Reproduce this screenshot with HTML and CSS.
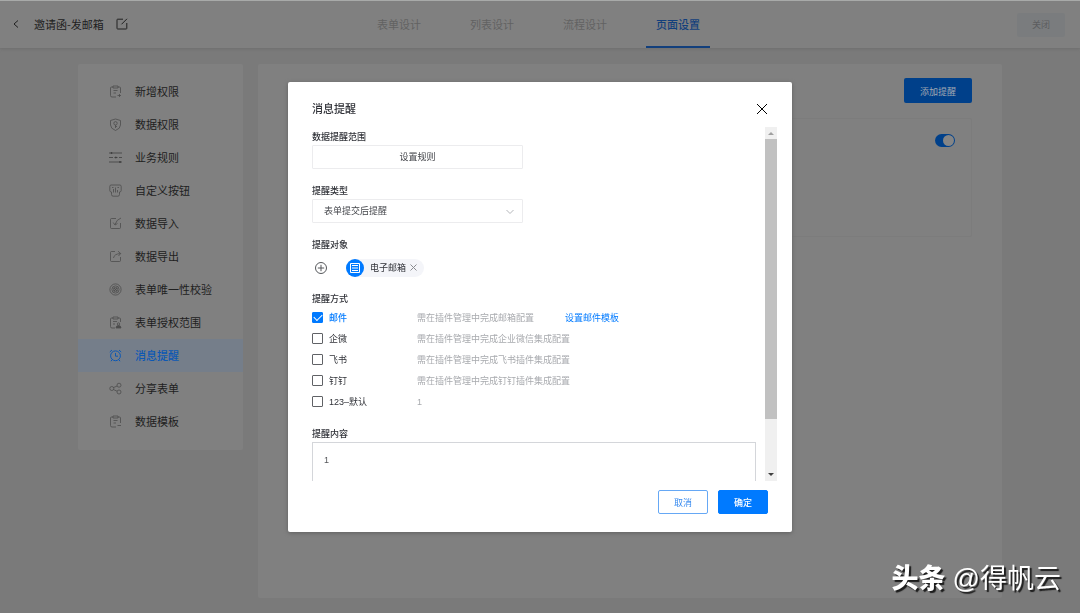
FILE: index.html
```html
<!DOCTYPE html>
<html lang="zh-CN">
<head>
<meta charset="utf-8">
<meta name="viewport" content="width=device-width, initial-scale=1">
<title>消息提醒</title>
<link rel="stylesheet" href="styles.css">
</head>
<body>
<header class="topbar">
  <div class="topbar-title">
    <button class="icon-btn" type="button" aria-label="返回"><svg width="8" height="10" viewBox="0 0 8 10"><path d="M6 1.500 2 5l4 3.500"/></svg></button>
    <h1 class="page-name">邀请函-发邮箱</h1>
    <button class="icon-btn" type="button" aria-label="编辑"><svg width="12" height="12" viewBox="0 0 12 12"><path d="M7 1.200H1.600q-.6 0-.6.6v8.600q0 .6.6.6h8.600q.6 0 .6-.6V5M5.500 6.300 11 .8"/></svg></button>
  </div>
  <nav class="tabs">
    <a class="tab" href="#form">表单设计</a>
    <a class="tab" href="#list">列表设计</a>
    <a class="tab" href="#flow">流程设计</a>
    <a class="tab tab-active" href="#page">页面设置</a>
  </nav>
  <button class="close-page" type="button">关闭</button>
</header>

<div class="layout">
  <nav class="sidebar">
    <a class="side-item" href="#1"><svg class="side-icon" viewBox="0 0 13 13"><path d="M4 2H2.500Q1.500 2 1.500 3v7.500q0 1.500 1.500 1.500h4M9 2h1.500q1 0 1 1v5M4 1h5v2H4zM4.500 5.500h4M4.500 8h2.500M8.500 10.500h3.500M10.500 9v3"/></svg>新增权限</a>
    <a class="side-item" href="#2"><svg class="side-icon" viewBox="0 0 13 13"><path d="M6.500 1 11.500 2.500v4.500q0 3.500-5 5.500-5-2-5-5.500V2.500zM6.500 7v3M6.500 8.500h1.500"/><circle cx="6.500" cy="5.300" r="1.700"/></svg>数据权限</a>
    <a class="side-item" href="#3"><svg class="side-icon side-icon-strong" viewBox="0 0 13 13"><path d="M0 2h13M0 6.500h4M5.500 6.500h3M10 6.500h3M0 11h13"/><path class="fill" d="M2 1.500h1v1H2zM6.300 6h1v1h-1zM10.500 10.500h1v1h-1z"/></svg>业务规则</a>
    <a class="side-item" href="#4"><svg class="side-icon" viewBox="0 0 13 13"><path d="M2.500 8Q.8 8 .8 6.500V2.500Q.8 1 2 1h9q1.200 0 1.200 1.500v4Q12.200 8 10.500 8M2.500 8v2.500q0 1.700 1.700 1.700h4.600q1.700 0 1.700-1.700V8M4.500 8.500V5M6.500 8.500v-5M8.500 8.500V6M3 3.500h1.500M8.500 3.500H10"/></svg>自定义按钮</a>
    <a class="side-item" href="#5"><svg class="side-icon" viewBox="0 0 13 13"><path d="M7 1.500H2.500q-1 0-1 1v8q0 1 1 1h8q1 0 1-1V6M12 1Q7.500 2.500 6 7.500M4.200 5.500 6 8l2.500-1.500"/></svg>数据导入</a>
    <a class="side-item" href="#6"><svg class="side-icon" viewBox="0 0 13 13"><path d="M6 1.500H2.500q-1 0-1 1v8q0 1 1 1h8q1 0 1-1V7M4.500 8Q5 4 11.500 3.500M9 1.200l2.700 2.300L9.500 6"/></svg>数据导出</a>
    <a class="side-item" href="#7"><svg class="side-icon" viewBox="0 0 13 13"><circle cx="6.500" cy="6.500" r="5.600"/><circle cx="6.500" cy="6.500" r="3.600"/><path d="M4.800 4.800h3.400v3.400H4.800zM5 5l3 3M8 5 5 8"/></svg>表单唯一性校验</a>
    <a class="side-item" href="#8"><svg class="side-icon" viewBox="0 0 13 13"><path d="M4 2H2.500Q1.500 2 1.500 3v7.500q0 1.500 1.500 1.500h3M9 2h1.500q1 0 1 1v3M4 1h5v2H4zM4 5.500h4M4 8h2"/><circle cx="9.500" cy="8" r="1.200"/><path class="fill" d="M7 12q0-2.500 2.500-2.500T12 12z"/></svg>表单授权范围</a>
    <a class="side-item side-item-active" href="#9" aria-current="page"><svg class="side-icon" viewBox="0 0 13 13"><circle cx="6.500" cy="6.800" r="4.900"/><path d="M6.500 4v3.200H9M.8 3 3 1M12.200 3 10 1M3 10.800 2 12.200M10 10.800l1 1.400"/></svg>消息提醒</a>
    <a class="side-item" href="#10"><svg class="side-icon" viewBox="0 0 13 13"><circle cx="2.800" cy="6.500" r="2"/><circle cx="10" cy="3.200" r="2"/><circle cx="10" cy="10" r="2"/><path d="M4.600 5.500 8.200 4M4.600 7.600 8 9.200"/></svg>分享表单</a>
    <a class="side-item" href="#11"><svg class="side-icon" viewBox="0 0 13 13"><path d="M4 2H2.500Q1.500 2 1.500 3v7.500q0 1.500 1.500 1.500h4M9 2h1.500q1 0 1 1v5M4 1h5v2H4zM4.500 5.500h4M4.500 8h2.500M8.500 10.500h3.500"/></svg>数据模板</a>
  </nav>
  <main class="content">
    <button class="add-btn" type="button">添加提醒</button>
    <section class="rule-card"><input class="switch" type="checkbox" role="switch" checked aria-label="启用提醒"></section>
  </main>
</div>

<div class="overlay">
  <section class="dialog" role="dialog" aria-modal="true" aria-labelledby="dialog-title">
    <div class="dialog-head">
      <h2 class="dialog-title" id="dialog-title">消息提醒</h2>
      <button class="icon-btn dialog-close" type="button" aria-label="关闭对话框"><svg width="12" height="12" viewBox="0 0 12 12"><path d="m1 1 10 10M11 1 1 11"/></svg></button>
    </div>
    <div class="dialog-body">
      <form class="fields" id="remind-form">
        <div class="field">
          <span class="label">数据提醒范围</span>
          <button class="control rule-btn" type="button">设置规则</button>
        </div>
        <div class="field">
          <label class="label" for="type">提醒类型</label>
          <div class="select-wrap">
            <select class="control type-select" id="type"><option>表单提交后提醒</option></select>
            <svg class="chevron" width="8" height="6" viewBox="0 0 8 6"><path d="m.5 1 3.500 3.500L7.500 1"/></svg>
          </div>
        </div>
        <div class="field">
          <span class="label">提醒对象</span>
          <div class="targets">
            <button class="icon-btn add-target" type="button" aria-label="添加对象"><svg width="12" height="12" viewBox="0 0 12 12"><circle cx="6" cy="6" r="5.500"/><path d="M2.800 6h6.400M6 2.800v6.400"/></svg></button>
            <span class="chip">
              <svg width="18" height="18" viewBox="0 0 18 18"><circle class="chip-disc" cx="9" cy="9" r="9"/><path class="chip-lines" d="M4.500 4.500h9v9h-9zM6 6.500h6M6 9h6M6 11.500h6"/></svg>
              <span>电子邮箱</span>
              <button class="icon-btn chip-remove" type="button" aria-label="移除电子邮箱"><svg width="7" height="7" viewBox="0 0 7 7"><path d="m.5.500 6 6M6.500.500l-6 6"/></svg></button>
            </span>
          </div>
        </div>
        <div class="field">
          <span class="label">提醒方式</span>
          <div class="method"><label class="method-name"><input class="check" type="checkbox" checked><span>邮件</span></label><span class="hint">需在插件管理中完成邮箱配置</span><a class="link" href="#template">设置邮件模板</a></div>
          <div class="method"><label class="method-name"><input class="check" type="checkbox"><span>企微</span></label><span class="hint">需在插件管理中完成企业微信集成配置</span></div>
          <div class="method"><label class="method-name"><input class="check" type="checkbox"><span>飞书</span></label><span class="hint">需在插件管理中完成飞书插件集成配置</span></div>
          <div class="method"><label class="method-name"><input class="check" type="checkbox"><span>钉钉</span></label><span class="hint">需在插件管理中完成钉钉插件集成配置</span></div>
          <div class="method"><label class="method-name"><input class="check" type="checkbox"><span>123–默认</span></label><span class="hint">1</span></div>
        </div>
        <div class="field">
          <label class="label" for="body">提醒内容</label>
          <textarea class="message" id="body">1</textarea>
        </div>
      </form>
      <div class="scrollbar" aria-hidden="true">
        <svg class="arrow arrow-up" viewBox="0 0 12 12"><path d="M3 8h6L6 5z"/></svg>
        <div class="track"><div class="thumb"></div></div>
        <svg class="arrow" viewBox="0 0 12 12"><path d="M3 4h6L6 7z"/></svg>
      </div>
    </div>
    <div class="dialog-foot">
      <button class="btn" type="button">取消</button>
      <button class="btn btn-primary" type="submit" form="remind-form">确定</button>
    </div>
  </section>
</div>
<div class="watermark"><strong>头条</strong><span>@得帆云</span></div>
</body>
</html>
```
FILE: styles.css
```css
:root {
  --blue: #007aff;
  --blue-dim: #00408a;
  --page: #7a7a7a;
  --panel: #808080;
  --ink-dim: #202020;
}
* { box-sizing: border-box; }
body {
  margin: 0;
  min-height: 100vh;
  display: flex;
  flex-direction: column;
  background: var(--page);
  color: var(--ink-dim);
  font: 11px/18px "Noto Sans CJK SC", sans-serif;
}
button, input, select, textarea { font: inherit; color: inherit; margin: 0; }
button { cursor: pointer; padding: 0; border: 0; background: none; }
a { color: inherit; text-decoration: none; }
h1, h2 { margin: 0; font-size: 11px; font-weight: 400; }
svg { display: block; flex: none; fill: none; stroke: currentColor; }
.icon-btn { display: flex; align-items: center; justify-content: center; }

.topbar {
  display: grid;
  grid-template-columns: 1fr auto 1fr;
  align-items: center;
  height: 48px;
  padding: 0 15px 0 12px;
  background: var(--panel);
  border-top: 1px solid #a8aaa9;
  box-shadow: 0 1px 3px #6e6e6e;
}
.topbar-title { display: flex; align-items: center; gap: 12px; padding-bottom: 1px; }
.page-name { margin-left: 2px; }
.tabs { display: flex; align-self: stretch; gap: 29px; }
.tab {
  display: flex;
  align-items: center;
  padding: 0 10px;
  border-bottom: 2px solid transparent;
  color: #626262;
}
.tab-active { color: #123f7c; border-color: #123f7c; font-weight: 500; }
.close-page {
  justify-self: end;
  width: 48px;
  height: 24px;
  border-radius: 2px;
  background: #7a7c7e;
  color: #5c5d5f;
  font-size: 9px;
}

.layout { flex: 1; display: flex; gap: 15px; padding: 16px 78px 15px; }
.sidebar {
  flex: none;
  align-self: flex-start;
  width: 165px;
  padding: 11px 0 12px;
  background: var(--panel);
  border-radius: 2px;
}
.side-item {
  display: flex;
  align-items: center;
  gap: 13px;
  height: 33px;
  padding: 0 0 1px 31px;
}
.side-icon { width: 13px; height: 13px; color: #4c4c4c; stroke-width: .8; }
.side-icon-strong { color: #404040; }
.side-icon .fill { fill: currentColor; }
.side-item-active { background: #757e8a; color: #0c58b4; font-weight: 500; }
.side-item-active .side-icon { color: #0c58b4; stroke-width: 1; }
.content {
  flex: 1;
  display: flex;
  flex-direction: column;
  gap: 15px;
  padding: 14px 30px;
  background: var(--panel);
  border-radius: 2px;
}
.add-btn {
  align-self: flex-end;
  padding: 5px 16px 2px;
  background: var(--blue-dim);
  color: #a0a8b2;
  border-radius: 2px;
  font-size: 9px;
}
.rule-card {
  display: flex;
  justify-content: flex-end;
  padding: 15px 16px 89px;
  border: 1px solid #7c7c7c;
  border-radius: 2px;
}
.switch {
  appearance: none;
  display: flex;
  justify-content: flex-end;
  width: 20px;
  height: 13px;
  padding: 1px;
  border-radius: 7px;
  background: var(--blue-dim);
}
.switch::before { content: ""; width: 11px; border-radius: 50%; background: #858585; }

.overlay {
  position: fixed;
  inset: 0;
  display: flex;
  align-items: center;
  justify-content: center;
}
.dialog {
  width: min(504px, 92vw);
  background: #fff;
  border-radius: 2px;
  box-shadow: 0 1px 4px #606060;
  color: #303238;
}
.dialog-head {
  display: flex;
  align-items: center;
  justify-content: space-between;
  padding: 18px 24px 9px;
}
.dialog-title { line-height: 16px; padding-bottom: 2px; font-weight: 500; }
.dialog-close { color: #000; }
.dialog-body {
  display: flex;
  gap: 9px;
  height: calc(100vh - 259px);
  padding: 0 15px 0 24px;
  font-family: "Liberation Sans", "Noto Sans CJK SC", sans-serif;
  font-size: 9px;
}
.fields {
  flex: 1;
  display: flex;
  flex-direction: column;
  gap: 12px;
  overflow: hidden;
}
.field { flex: none; display: flex; flex-direction: column; }
.label { padding-top: 2px; line-height: 16px; font-weight: 500; }
.control {
  width: 211px;
  height: 24px;
  border: 1px solid #ececee;
  border-radius: 1px;
  background: #fff;
  color: #45474c;
}
.select-wrap { position: relative; width: 211px; height: 24px; }
.type-select { appearance: none; padding: 1px 11px 0; }
.chevron { position: absolute; right: 9px; top: 10px; color: #b4b6ba; pointer-events: none; }
.targets { display: flex; align-items: center; gap: 19px; padding: 6px 0 0 3px; }
.add-target { color: #55575b; }
.chip {
  display: flex;
  align-items: center;
  gap: 6px;
  padding-right: 7px;
  border-radius: 9px;
  background: #f4f5f9;
}
.chip-disc { fill: var(--blue); stroke: none; }
.chip-lines { stroke: #fff; }
.chip-remove { color: #8a8c90; margin-left: -2px; }
.method { display: flex; align-items: center; height: 21px; }
.method-name { display: flex; align-items: center; gap: 6px; width: 105px; }
.method-name span, .hint, .link { padding-top: 2px; }
.check {
  appearance: none;
  display: grid;
  place-items: center;
  width: 11px;
  height: 11px;
  border: 1px solid #606266;
  border-radius: 1px;
}
.check:checked { background: var(--blue); border-color: var(--blue); }
.check:checked::before {
  content: "";
  width: 7px;
  height: 4px;
  margin-bottom: 2px;
  border: solid #fff;
  border-width: 0 0 1px 1px;
  transform: rotate(-45deg);
}
.check:checked + span { color: var(--blue); font-weight: 500; }
.hint { color: #a8aaae; }
.link { margin-left: 31px; color: var(--blue); }
.message {
  height: 90px;
  padding: 8px 11px;
  border: 1px solid #d4d6da;
  resize: none;
  outline: 0;
  color: #55575b;
}
.scrollbar { flex: none; display: flex; flex-direction: column; width: 12px; background: #f0f0f0; }
.arrow { width: 12px; height: 12px; fill: #404040; stroke: none; }
.arrow-up { fill: #a0a0a0; }
.track { flex: 1; }
.thumb { height: 85%; background: #c1c1c1; }
.dialog-foot {
  display: flex;
  justify-content: flex-end;
  gap: 10px;
  padding: 9px 24px 18px;
}
.btn {
  width: 50px;
  height: 24px;
  padding-top: 2px;
  border: 1px solid #66a8f5;
  border-radius: 2px;
  background: #fff;
  color: #3a8cf0;
  font-size: 9px;
}
.btn-primary { background: var(--blue); border-color: var(--blue); color: #fff; font-weight: 500; }

.watermark {
  position: fixed;
  right: 19px;
  bottom: 14px;
  display: flex;
  gap: 7px;
  color: #fff;
  font-family: "Liberation Sans", "Noto Sans CJK SC", sans-serif;
  font-size: 27px;
  line-height: 40px;
  text-shadow: 2px 2px 1px #1c1c1c;
}
.watermark strong { font-weight: 900; }
```
